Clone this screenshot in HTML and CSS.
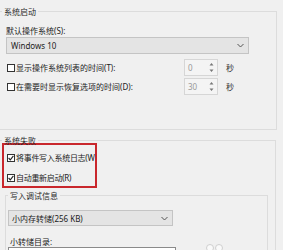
FILE: index.html
```html
<!DOCTYPE html>
<html lang="zh-CN">
<head>
<meta charset="utf-8">
<title>启动和故障恢复</title>
<link rel="stylesheet" href="styles.css">
</head>
<body>
<fieldset class="group group-start">
  <legend class="group-title">系统启动</legend>
  <div class="field-label label-os">默认操作系统(S):</div>
  <div class="combo combo-os">
    <span class="combo-text">Windows 10</span>
    <svg class="chevron" width="7" height="5" viewBox="0 0 7 5"><path d="M0.5 1 L3.5 4 L6.5 1" fill="none" stroke="#555" stroke-width="1"/></svg>
  </div>
  <div class="opt-row">
    <label class="check"><span class="box"></span>显示操作系统列表的时间(T):</label>
    <div class="spin"><span class="spin-val">0</span><svg class="spin-arrows" width="7" height="13" viewBox="0 0 7 13"><path d="M1.5 4.5 L3.5 2 L5.5 4.5 Z M1.5 8.5 L3.5 11 L5.5 8.5 Z" fill="#777"/></svg></div>
    <span class="unit">秒</span>
  </div>
  <div class="opt-row">
    <label class="check"><span class="box"></span>在需要时显示恢复选项的时间(D):</label>
    <div class="spin"><span class="spin-val">30</span><svg class="spin-arrows" width="7" height="13" viewBox="0 0 7 13"><path d="M1.5 4.5 L3.5 2 L5.5 4.5 Z M1.5 8.5 L3.5 11 L5.5 8.5 Z" fill="#777"/></svg></div>
    <span class="unit">秒</span>
  </div>
</fieldset>

<fieldset class="group group-fail">
  <legend class="group-title">系统失败</legend>
  <div class="highlight">
    <label class="check"><span class="box checked"><svg width="6" height="6" viewBox="0 0 6 6"><path d="M0.6 3 L2.3 4.8 L5.4 0.9" fill="none" stroke="#222" stroke-width="1.1"/></svg></span>将事件写入系统日志(W</label>
    <label class="check"><span class="box checked"><svg width="6" height="6" viewBox="0 0 6 6"><path d="M0.6 3 L2.3 4.8 L5.4 0.9" fill="none" stroke="#222" stroke-width="1.1"/></svg></span>自动重新启动(R)</label>
  </div>
  <fieldset class="sub">
    <legend class="group-title sub-title">写入调试信息</legend>
    <div class="combo combo-dump">
      <span class="combo-text">小内存转储(256 KB)</span>
      <svg class="chevron" width="7" height="5" viewBox="0 0 7 5"><path d="M0.5 1 L3.5 4 L6.5 1" fill="none" stroke="#555" stroke-width="1"/></svg>
    </div>
    <div class="field-label label-dir">小转储目录:</div>
    <div class="dir-row">
      <div class="text-input"></div>
      <span class="dots"><span class="dot"></span><span class="dot"></span></span>
    </div>
  </fieldset>
</fieldset>
</body>
</html>
```
FILE: styles.css
```css
html, body {
  margin: 0;
  padding: 0;
}
body {
  width: 283px;
  height: 250px;
  overflow: hidden;
  background: #f0f0f0;
  color: #222;
  font-family: "Noto Sans", "Noto Sans CJK SC", sans-serif;
  font-size: 8px;
  line-height: 11px;
}
.group {
  border: 1px solid #dcdcdc;
  padding: 0;
  min-width: 0;
}
.group-start {
  margin: 6px 6px 0 -1px;
  padding-bottom: 34px;
  border-left-color: transparent;
}
.group-fail {
  margin: 5px 7px 0 -1px;
  padding-bottom: 20px;
  border-left-color: transparent;
}
.group-title {
  margin-left: 2px;
  padding: 0 2px;
  line-height: 11px;
  color: #2a2a2a;
}
.field-label {
  white-space: nowrap;
}
.label-os {
  margin: 8px 0 0 6px;
}
.combo {
  display: flex;
  align-items: center;
  justify-content: space-between;
  box-sizing: border-box;
  background: #e4e4e4;
  border: 1px solid #c4c4c4;
}
.combo-os {
  margin: 1px 0 0 6px;
  width: 243px;
  height: 17px;
  padding: 0 4px 0 4px;
}
.combo-text {
  white-space: nowrap;
}
.opt-row {
  display: flex;
  align-items: center;
  height: 17px;
  margin-top: 5px;
  padding-left: 7px;
}
.opt-row + .opt-row {
  margin-top: 2px;
}
.check {
  display: flex;
  align-items: center;
  gap: 1px;
  white-space: nowrap;
}
.opt-row .check {
  flex: 1;
}
.box {
  display: inline-flex;
  align-items: center;
  justify-content: center;
  box-sizing: border-box;
  width: 8px;
  height: 8px;
  border: 1px solid #333;
  background: #fff;
  flex: none;
}
.spin {
  display: flex;
  align-items: center;
  justify-content: space-between;
  box-sizing: border-box;
  width: 34px;
  height: 17px;
  border: 1px solid #d6d6d6;
  background: #f4f4f4;
  padding: 0 2px 0 3px;
}
.spin-val {
  color: #9a9a9a;
}
.unit {
  margin: 0 42px 0 8px;
  color: #333;
}
.highlight {
  margin: -3px 0 0 2px;
  width: 95px;
  box-sizing: border-box;
  border: 2px solid #c9272c;
  padding: 4px 0 0 3px;
  height: 45px;
  overflow: hidden;
  display: flex;
  flex-direction: column;
  gap: 3px;
  letter-spacing: -0.3px;
}
.highlight .check {
  height: 17px;
}
.sub {
  margin: 2px 7px 0 5px;
  padding: 0;
  border: 1px solid #dcdcdc;
  border-bottom: none;
  min-width: 0;
  height: 80px;
}
.sub-title {
  margin-left: 2px;
}
.combo-dump {
  margin: 9px 0 0 2px;
  width: 165px;
  height: 16px;
  padding: 0 4px 0 3px;
}
.label-dir {
  margin: 10px 0 0 4px;
}
.dir-row {
  display: flex;
  align-items: flex-start;
}
.text-input {
  margin-left: 2px;
  width: 168px;
  height: 17px;
  box-sizing: border-box;
  border: 1px solid #8a8a8a;
  background: #fff;
}
.dots {
  display: flex;
  gap: 1px;
  margin: -3px 0 0 30px;
}
.dot {
  width: 6px;
  height: 6px;
  border-radius: 50%;
  border: 1px solid #cfcfcf;
  background: #fafafa;
}
```
